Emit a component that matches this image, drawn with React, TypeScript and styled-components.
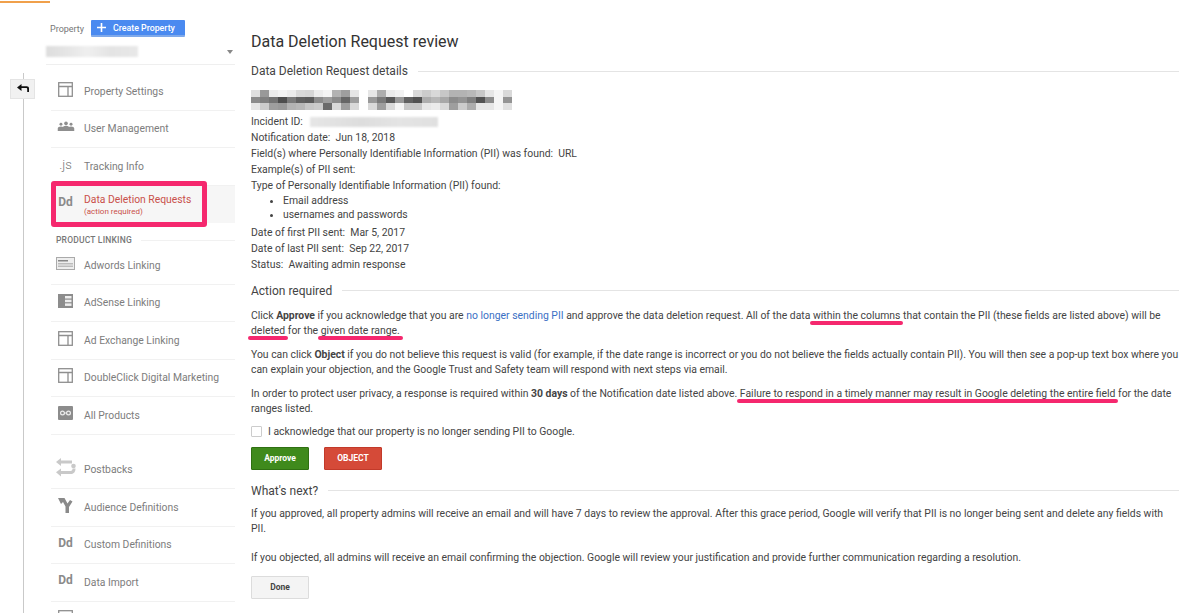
import React from 'react'
import styled, { createGlobalStyle } from 'styled-components'

const GlobalStyle = createGlobalStyle`
  html, body { margin: 0; padding: 0; background: #fff; }
  body {
    font-family: Roboto, "Liberation Sans", Arial, sans-serif;
    color: #444;
    overflow: hidden;
  }
`

const LayoutIcon = () => (
  <svg width='15' height='15' viewBox='0 0 15 15' fill='none' stroke='#8f8f8f' strokeWidth='1.3'>
    <rect x='0.7' y='0.7' width='13.600' height='13.600' />
    <path d='M0.7 4.500h13.600M10 4.500v9.800' />
  </svg>
)

const PeopleIcon = () => (
  <svg width='18' height='11' viewBox='0 0 19 12' fill='#8f8f8f'>
    <circle cx='9.5' cy='2.6' r='2' />
    <circle cx='4' cy='3.6' r='1.6' />
    <circle cx='15' cy='3.6' r='1.6' />
    <path d='M0.5 11V8.2C0.5 6.8 2 6 4 6s3.500.8 3.5 2.200V11zM6 11V7.500C6 6 7.500 5.200 9.500 5.200S13 6 13 7.500V11zM11.500 11V8.200C11.500 6.800 13 6 15 6s3.500.8 3.500 2.200V11z' />
  </svg>
)

const AdwordsIcon = () => (
  <svg width='19' height='13' viewBox='0 0 19 13'>
    <rect x='0.5' y='0.5' width='18' height='12' fill='#eee' stroke='#aaa' />
    <rect x='2' y='3' width='10' height='1.500' fill='#888' />
    <rect x='2' y='6' width='15' height='1.500' fill='#bbb' />
    <rect x='2' y='8.500' width='15' height='1.500' fill='#bbb' />
  </svg>
)

const AdsenseIcon = () => (
  <svg width='15' height='14' viewBox='0 0 15 14'>
    <rect width='15' height='14' fill='#8c8c8c' />
    <rect x='7' y='2' width='6.500' height='2.500' fill='#eee' />
    <rect x='7' y='5.700' width='6.500' height='2.500' fill='#eee' />
    <rect x='7' y='9.400' width='6.500' height='2.500' fill='#eee' />
  </svg>
)

const ProductsIcon = () => (
  <svg width='15' height='14' viewBox='0 0 15 14' fill='none'>
    <rect width='15' height='14' rx='1' fill='#8c8c8c' />
    <circle cx='4.500' cy='7' r='1.900' stroke='#eee' strokeWidth='1.200' />
    <circle cx='10.500' cy='7' r='1.900' stroke='#eee' strokeWidth='1.200' />
    <path d='M6 7h3' stroke='#eee' />
  </svg>
)

const PostbacksIcon = () => (
  <svg width='20' height='19' viewBox='0 0 20 19' fill='#c9c9c9'>
    <path d='M5 0v2.500h11v3H5V8L0 4zM5 10.500V13h9.500c1.500 0 2-1 2-2.500h3c0 3-1.500 5.500-4.500 5.500H5v2.500L0 14.300z' />
    <circle cx='17.500' cy='8' r='2.300' />
  </svg>
)

const AudienceIcon = () => (
  <svg width='15' height='15' viewBox='0 0 15 15' fill='#8a8a8a'>
    <path d='M0 0h6.500L9.500 5.500 12 2l2.500 1.500-3.500 5.500V15H7.500V8.500L5 4 3 6z' />
  </svg>
)

const BackIcon = () => (
  <svg width='12' height='8' viewBox='0 0 12 8' fill='#111'>
    <path d='M4.500 0v2.300h5.200c1.500 0 2.300.8 2.300 2.300V8h-1.800V5.200c0-.7-.4-1.100-1.100-1.100H4.500V7L0 3.500z' />
  </svg>
)

const PlusIcon = () => (
  <svg width='9' height='9' viewBox='0 0 9 9' fill='#fff'>
    <path d='M3.700 0h1.600v3.700H9v1.600H5.300V9H3.700V5.300H0V3.700h3.700z' />
  </svg>
)

type NavEntry = { label: string; icon: React.ReactNode; alert?: boolean }

const DdIcon = styled.span`
  font-weight: 700;
  font-size: 12px;
  color: #8a8a8a;
`

const JsIcon = styled.span`
  font-size: 13px;
  font-weight: 300;
  color: #777;
`

const settings: NavEntry[] = [
  { label: 'Property Settings', icon: <LayoutIcon /> },
  { label: 'User Management', icon: <PeopleIcon /> },
  { label: 'Tracking Info', icon: <JsIcon>.js</JsIcon> },
  { label: 'Data Deletion Requests', icon: <DdIcon>Dd</DdIcon>, alert: true }
]

const linking: NavEntry[] = [
  { label: 'Adwords Linking', icon: <AdwordsIcon /> },
  { label: 'AdSense Linking', icon: <AdsenseIcon /> },
  { label: 'Ad Exchange Linking', icon: <LayoutIcon /> },
  { label: 'DoubleClick Digital Marketing', icon: <LayoutIcon /> },
  { label: 'All Products', icon: <ProductsIcon /> }
]

const tools: NavEntry[] = [
  { label: 'Postbacks', icon: <PostbacksIcon /> },
  { label: 'Audience Definitions', icon: <AudienceIcon /> },
  { label: 'Custom Definitions', icon: <DdIcon>Dd</DdIcon> },
  { label: 'Data Import', icon: <DdIcon>Dd</DdIcon> },
  { label: '', icon: <LayoutIcon /> }
]

// pixel mosaic standing in for the redacted title
const mosaic = [
  [88, 60, 92, 95, 92, 85, 84, 93, 96, 70, 62, 90, 100, 90, 68, 92, 95, 100, 85, 80, 85, 78, 70, 70, 72, 78, 90, 96, 85],
  [55, 50, 45, 30, 48, 38, 36, 55, 62, 55, 40, 62, 100, 60, 48, 35, 60, 38, 32, 68, 72, 66, 55, 58, 50, 32, 55, 96, 58],
  [90, 80, 62, 60, 70, 72, 78, 80, 42, 85, 62, 85, 100, 85, 62, 85, 96, 78, 78, 90, 92, 85, 62, 80, 68, 90, 90, 96, 88]
]

const App = () => (
  <Page>
    <GlobalStyle />
    <TopAccent />
    <Rail>
      <BackButton>
        <BackIcon />
      </BackButton>
    </Rail>
    <Sidebar>
      <PropertyHead>
        <PropertyLabel>Property</PropertyLabel>
        <CreateButton>
          <PlusIcon />
          Create Property
        </CreateButton>
      </PropertyHead>
      <PropertySelect>
        <BlurredName />
        <Caret />
      </PropertySelect>
      <SettingsList>
        {settings.map((item) => (
          <NavRow key={item.label} $active={item.alert}>
            <NavIcon>{item.icon}</NavIcon>
            <NavText>
              <NavLabel $alert={item.alert}>{item.label}</NavLabel>
              {item.alert && <NavNote>(action required)</NavNote>}
            </NavText>
            {item.alert && <Highlight />}
          </NavRow>
        ))}
      </SettingsList>
      <NavHeading>PRODUCT LINKING</NavHeading>
      <NavList>
        {linking.map((item) => (
          <NavRow key={item.label}>
            <NavIcon>{item.icon}</NavIcon>
            <NavText>
              <NavLabel>{item.label}</NavLabel>
            </NavText>
          </NavRow>
        ))}
      </NavList>
      <ToolList>
        {tools.map((item) => (
          <NavRow key={item.label}>
            <NavIcon>{item.icon}</NavIcon>
            <NavText>
              <NavLabel>{item.label}</NavLabel>
            </NavText>
          </NavRow>
        ))}
      </ToolList>
    </Sidebar>
    <Content>
      <Title>Data Deletion Request review</Title>
      <SectionTitle>Data Deletion Request details</SectionTitle>
      <Mosaic>
        {mosaic.flat().map((shade, i) => (
          <MosaicCell key={i} $shade={shade} />
        ))}
      </Mosaic>
      <Details>
        <Line>
          Incident ID: <BlurredId />
        </Line>
        <Line>Notification date:&nbsp; Jun 18, 2018</Line>
        <Line>Field(s) where Personally Identifiable Information (PII) was found:&nbsp; URL</Line>
        <Line>Example(s) of PII sent:</Line>
        <Line>Type of Personally Identifiable Information (PII) found:</Line>
        <Bullets>
          <li>Email address</li>
          <li>usernames and passwords</li>
        </Bullets>
        <Line>Date of first PII sent:&nbsp; Mar 5, 2017</Line>
        <Line>Date of last PII sent:&nbsp; Sep 22, 2017</Line>
        <Line>Status:&nbsp; Awaiting admin response</Line>
      </Details>
      <ActionTitle>Action required</ActionTitle>
      <Para>
        Click <b>Approve</b> if you acknowledge that you are <Link>no longer sending PII</Link> and
        approve the data deletion request. All of the data <Marked>within the columns</Marked> that
        contain the PII (these fields are listed above) will be <Marked>deleted</Marked> for the{' '}
        <Marked>given date range.</Marked>
      </Para>
      <Para>
        You can click <b>Object</b> if you do not believe this request is valid (for example, if the
        date range is incorrect or you do not believe the fields actually contain PII). You will then
        see a pop-up text box where you can explain your objection, and the Google Trust and Safety
        team will respond with next steps via email.
      </Para>
      <Para>
        In order to protect user privacy, a response is required within <b>30 days</b> of the
        Notification date listed above.{' '}
        <Marked>Failure to respond in a timely manner may result in Google deleting the entire field</Marked>{' '}
        for the date ranges listed.
      </Para>
      <Acknowledge>
        <CheckBox />
        I acknowledge that our property is no longer sending PII to Google.
      </Acknowledge>
      <Actions>
        <ActionButton $bg='#3f8a1c' $edge='#2f7012'>Approve</ActionButton>
        <ActionButton $bg='#d54a38' $edge='#c23a2a'>OBJECT</ActionButton>
      </Actions>
      <NextTitle>What's next?</NextTitle>
      <Para>
        If you approved, all property admins will receive an email and will have 7 days to review the
        approval. After this grace period, Google will verify that PII is no longer being sent and
        delete any fields with PII.
      </Para>
      <SpacedPara>
        If you objected, all admins will receive an email confirming the objection. Google will review
        your justification and provide further communication regarding a resolution.
      </SpacedPara>
      <DoneButton>Done</DoneButton>
    </Content>
  </Page>
)

export default App

const Page = styled.div`
  position: relative;
  display: flex;
  width: 1200px;
  height: 613px;
  overflow: hidden;
  background: #fff;
`

const TopAccent = styled.div`
  position: absolute;
  left: 0;
  top: 1px;
  width: 50px;
  height: 1.5px;
  background: #f0a04b;
`

const Rail = styled.div`
  width: 51px;
  flex: none;
  padding-top: 79px;
  padding-left: 10px;
  box-sizing: border-box;
  position: relative;

  &::before {
    content: '';
    position: absolute;
    left: 23px;
    top: 73px;
    bottom: 0;
    width: 1px;
    background: #c9c9c9;
  }
`

const BackButton = styled.div`
  position: relative;
  width: 25px;
  height: 20px;
  background: #f1f1f1;
  border: 1px solid #e4e4e4;
  box-sizing: border-box;
  display: flex;
  align-items: center;
  justify-content: center;
  padding-bottom: 3px;
`

const Sidebar = styled.div`
  width: 184px;
  flex: none;
  padding-top: 20px;
  box-sizing: border-box;
`

const PropertyHead = styled.div`
  display: flex;
  align-items: center;
  height: 17px;
`

const PropertyLabel = styled.span`
  font-size: 9px;
  color: #777;
  width: 40px;
  margin-left: -1px;
  margin-right: 1px;
`

const CreateButton = styled.div`
  width: 94px;
  height: 17px;
  background: #4a8af0;
  border-bottom: 2px solid #7fa9ea;
  border-radius: 1px;
  box-sizing: border-box;
  color: #fff;
  font-size: 8.800px;
  font-weight: 500;
  display: flex;
  align-items: center;
  padding-left: 6px;
  gap: 7px;
`

const PropertySelect = styled.div`
  display: flex;
  align-items: center;
  justify-content: space-between;
  height: 26px;
  margin-top: 2px;
  margin-left: -5px;
  border-bottom: 1px solid #efefef;
  padding-right: 2px;
  box-sizing: border-box;
`

const BlurredName = styled.div`
  width: 92px;
  height: 11px;
  background: linear-gradient(90deg, #ddd, #e6e6e6 25%, #efefef 45%, #e4e4e4 70%, #e8e8e8);
  filter: blur(1.200px);
`

const Caret = styled.div`
  width: 0;
  height: 0;
  border-left: 3.500px solid transparent;
  border-right: 3.500px solid transparent;
  border-top: 4.500px solid #888;
`

const NavList = styled.div`
  display: flex;
  flex-direction: column;
`

const SettingsList = styled(NavList)`
  margin-top: 8px;
`

const ToolList = styled(NavList)`
  margin-top: 17px;
`

const NavRow = styled.div<{ $active?: boolean }>`
  position: relative;
  height: 37.500px;
  box-sizing: border-box;
  display: flex;
  align-items: center;
  border-bottom: 1px solid #f1f1f1;
  background: ${({ $active }) => ($active ? '#f6f6f6' : 'transparent')};
  ${({ $active }) => $active && 'border-bottom: none;'}
`

const NavIcon = styled.div`
  width: 29px;
  margin-right: 4px;
  flex: none;
  display: flex;
  justify-content: center;
  align-items: center;
  padding-bottom: 4px;
`

const NavText = styled.div`
  display: flex;
  flex-direction: column;
`

const NavLabel = styled.span<{ $alert?: boolean }>`
  font-size: 10.350px;
  color: ${({ $alert }) => ($alert ? '#c9504a' : '#7d7d7d')};
`

const NavNote = styled.span`
  font-size: 8px;
  color: #c9504a;
  margin-top: 1px;
`

const Highlight = styled.div`
  position: absolute;
  left: 0;
  top: -5px;
  width: 156px;
  height: 46px;
  box-sizing: border-box;
  border: 5px solid #f5286e;
  border-radius: 3px;
`

const NavHeading = styled.div`
  display: flex;
  align-items: center;
  height: 24px;
  box-sizing: border-box;
  padding: 10px 0 0 5px;
  font-size: 8.500px;
  font-weight: 500;
  letter-spacing: 0.2px;
  color: #777;
  gap: 9px;

  &::after {
    content: '';
    flex: 1;
    height: 1px;
    background: #f1f1f1;
  }
`

const Content = styled.div`
  width: 928px;
  margin-left: 16px;
  flex: none;
  font-size: 10.420px;
  line-height: 16px;
  color: #444;
`

const Title = styled.h1`
  margin: 32px 0 0;
  font-size: 16px;
  line-height: 20px;
  font-weight: 400;
  color: #333;
`

const SectionTitle = styled.h2`
  display: flex;
  align-items: center;
  gap: 10px;
  margin: 9px 0 0;
  font-size: 12px;
  line-height: 20px;
  font-weight: 400;
  color: #444;

  &::after {
    content: '';
    flex: 1;
    height: 1px;
    background: #e4e4e4;
  }
`

const ActionTitle = styled(SectionTitle)`
  margin: 8px 0 7px;
`

const NextTitle = styled(SectionTitle)`
  margin: 11px 0 5px;
`

const Mosaic = styled.div`
  display: grid;
  grid-template-columns: repeat(29, 9px);
  grid-auto-rows: 6.500px;
  margin-top: 9px;
  filter: blur(0.7px);
`

const MosaicCell = styled.div<{ $shade: number }>`
  background: ${({ $shade }) => `hsl(0 0% ${$shade}%)`};
`

const Details = styled.div`
  margin-top: 4px;
`

const Line = styled.div`
  height: 16px;
  display: flex;
  align-items: center;
  white-space: pre-wrap;
`

const BlurredId = styled.span`
  display: inline-block;
  width: 128px;
  height: 10px;
  margin-left: 5px;
  background: linear-gradient(90deg, #e6e6e6, #ddd 40%, #e4e4e4 70%, #e0e0e0);
  filter: blur(1px);
`

const Bullets = styled.ul`
  margin: 0 0 2px;
  padding: 0 0 0 32px;
  line-height: 14.500px;
  li {
    height: 14.500px;
  }
`

const Para = styled.p`
  margin: 0 0 9.400px;
  line-height: 15px;
`

const SpacedPara = styled(Para)`
  margin-top: 14px;
`

const Link = styled.span`
  color: #3a6fc4;
`

const Marked = styled.span`
  position: relative;

  &::after {
    content: '';
    position: absolute;
    left: -3px;
    right: -3px;
    bottom: -3px;
    height: 4px;
    border-radius: 2px;
    background: #f5286e;
  }
`

const Acknowledge = styled.label`
  display: flex;
  align-items: center;
  gap: 6px;
  height: 12px;
`

const CheckBox = styled.span`
  width: 11px;
  height: 11px;
  box-sizing: border-box;
  border: 1px solid #ccc;
  border-radius: 1px;
`

const Actions = styled.div`
  display: flex;
  gap: 15px;
  margin-top: 9px;
`

const ActionButton = styled.div<{ $bg: string; $edge: string }>`
  width: 58px;
  height: 23px;
  display: flex;
  align-items: center;
  justify-content: center;
  background: ${({ $bg }) => $bg};
  border: 1px solid ${({ $edge }) => $edge};
  border-radius: 1px;
  box-sizing: border-box;
  color: #fff;
  font-size: 8.500px;
  font-weight: 700;
`

const DoneButton = styled.div`
  width: 58px;
  height: 23px;
  margin-top: 11px;
  display: flex;
  align-items: center;
  justify-content: center;
  background: #f4f4f4;
  border: 1px solid #dcdcdc;
  border-radius: 1px;
  box-sizing: border-box;
  color: #444;
  font-size: 8.500px;
  font-weight: 700;
`
